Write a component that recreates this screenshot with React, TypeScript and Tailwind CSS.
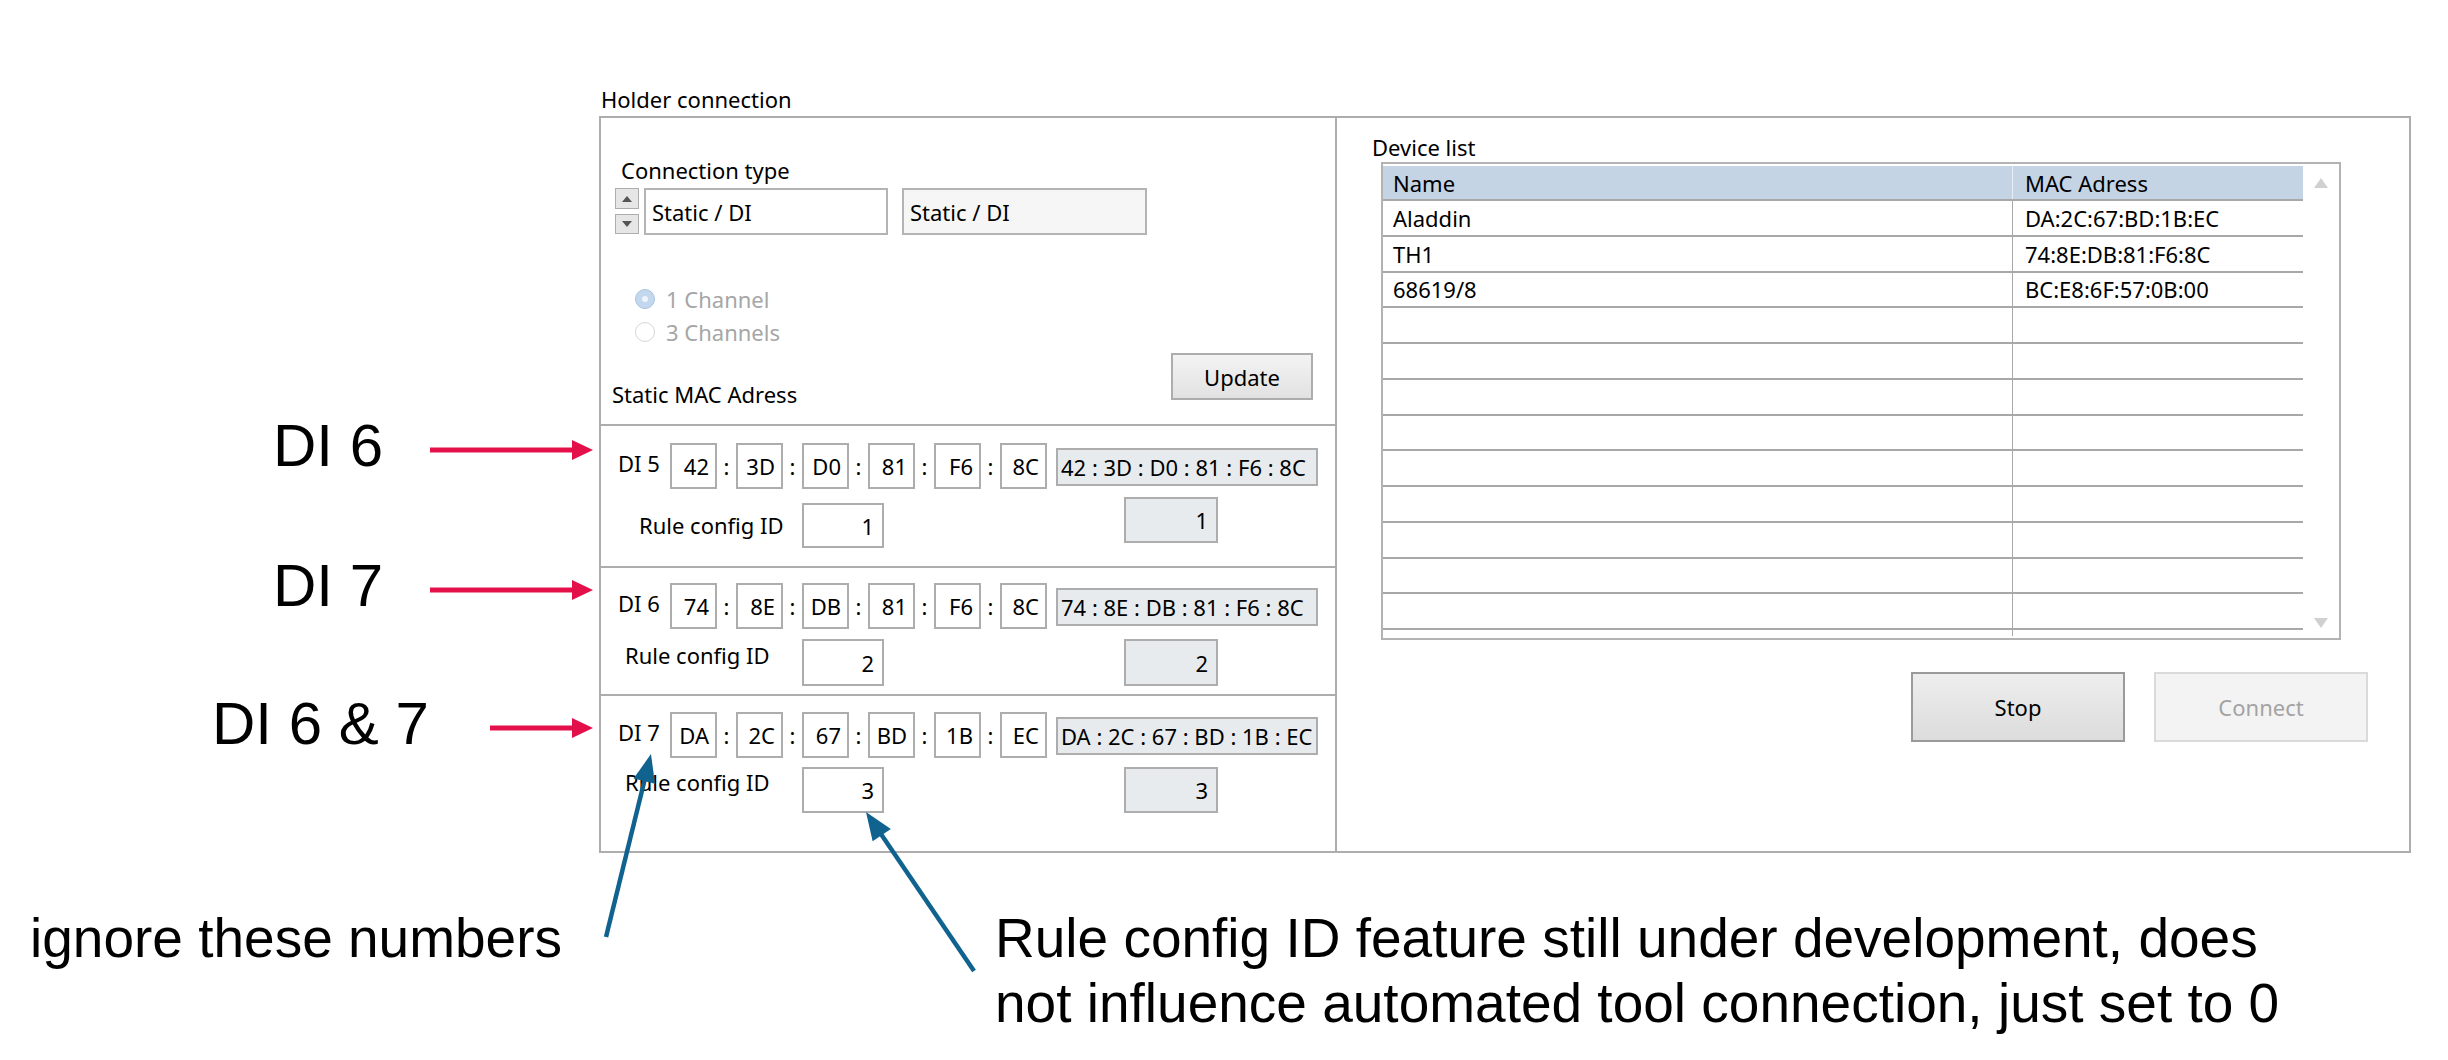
import React from 'react'

type MacRow = {
  label: string
  octets: string[]
  display: string
  ruleId: string
}

const macRows: MacRow[] = [
  { label: 'DI 5', octets: ['42', '3D', 'D0', '81', 'F6', '8C'], display: '42 : 3D : D0 : 81 : F6 : 8C', ruleId: '1' },
  { label: 'DI 6', octets: ['74', '8E', 'DB', '81', 'F6', '8C'], display: '74 : 8E : DB : 81 : F6 : 8C', ruleId: '2' },
  { label: 'DI 7', octets: ['DA', '2C', '67', 'BD', '1B', 'EC'], display: 'DA : 2C : 67 : BD : 1B : EC', ruleId: '3' },
]

const devices = [
  { name: 'Aladdin', mac: 'DA:2C:67:BD:1B:EC' },
  { name: 'TH1', mac: '74:8E:DB:81:F6:8C' },
  { name: '68619/8', mac: 'BC:E8:6F:57:0B:00' },
]

function Spinner() {
  return (
    <div className="flex w-[24px] flex-col gap-[5px]">
      <div className="flex h-[21px] items-center justify-center border border-[#adadad] bg-[#e6e6e6]">
        <svg width="10" height="6" viewBox="0 0 10 6"><path d="M0 6 L5 0 L10 6 Z" fill="#555" /></svg>
      </div>
      <div className="flex h-[20px] items-center justify-center border border-[#adadad] bg-[#e6e6e6]">
        <svg width="10" height="6" viewBox="0 0 10 6"><path d="M0 0 L5 6 L10 0 Z" fill="#555" /></svg>
      </div>
    </div>
  )
}

function OctetBoxes({ row }: { row: MacRow }) {
  return (
    <div className="flex items-start">
      <div className="mt-[7px] w-[52px] whitespace-nowrap">{row.label}</div>
      {row.octets.map((o, i) => (
        <div key={i} className="flex items-start">
          {i > 0 && <div className="flex h-[46px] w-[19px] items-center justify-center">:</div>}
          <div className="flex h-[46px] w-[47px] items-center justify-end border-2 border-[#adadad] bg-white pr-[6px]">
            {o}
          </div>
        </div>
      ))}
      <div className="ml-[9px] mt-[5px] flex h-[38px] w-[262px] items-center overflow-hidden whitespace-nowrap border-2 border-[#adadad] bg-[#e8ebee] pl-[3px]">
        {row.display}
      </div>
    </div>
  )
}

function RuleRow({ id, labelPad, labelTop, boxH, boxTop, grayH }: {
  id: string
  labelPad: string
  labelTop: string
  boxH: string
  boxTop: string
  grayH: string
}) {
  return (
    <div className="flex items-start">
      <div className={`w-[201px] whitespace-nowrap ${labelPad} ${labelTop}`}>Rule config ID</div>
      <div className={`flex w-[82px] items-center justify-end border-2 border-[#adadad] bg-white pr-[8px] ${boxH} ${boxTop}`}>
        {id}
      </div>
      <div className={`ml-[240px] flex w-[94px] items-center justify-end border-2 border-[#adadad] bg-[#e8ebee] pr-[8px] ${grayH}`}>
        {id}
      </div>
    </div>
  )
}

function LeftPanel() {
  return (
    <div className="flex w-[736px] flex-col border-r-2 border-[#adadad]">
      {/* Connection type + channels */}
      <div className="h-[308px] border-b-2 border-[#adadad]">
        <div className="pl-[20px] pt-[39px]">Connection type</div>
        <div className="mt-[5px] flex items-start pl-[14px]">
          <Spinner />
          <div className="ml-[5px] flex h-[47px] w-[244px] items-center border-2 border-[#b4b4b4] bg-white pl-[6px]">
            Static / DI
          </div>
          <div className="ml-[14px] flex h-[47px] w-[245px] items-center border-2 border-[#b4b4b4] bg-[#f6f6f6] pl-[6px]">
            Static / DI
          </div>
        </div>
        <div className="mt-[47px] pl-[34px] text-[#a6a6a6]">
          <div className="flex h-[33px] items-center gap-[11px]">
            <span className="flex h-[20px] w-[20px] items-center justify-center rounded-full border border-[#a9c3df] bg-[#c3d8ee]">
              <span className="h-[6px] w-[6px] rounded-full bg-[#eef4fa]" />
            </span>
            1 Channel
          </div>
          <div className="flex h-[33px] items-center gap-[11px]">
            <span className="h-[20px] w-[20px] rounded-full border border-[#d6d6d6] bg-white" />
            3 Channels
          </div>
        </div>
        <div className="flex h-[76px] items-start justify-between">
          <div className="ml-[11px] mt-[33px]">Static MAC Adress</div>
          <button className="mr-[22px] mt-[5px] h-[47px] w-[142px] border-2 border-[#adadad] bg-gradient-to-b from-[#f3f3f3] to-[#e2e2e2]">
            Update
          </button>
        </div>
      </div>

      {/* DI 5 */}
      <div className="h-[142px] border-b-2 border-[#adadad] pl-[17px] pt-[17px]">
        <OctetBoxes row={macRows[0]} />
        <div className="mt-[8px] -ml-[17px]">
          <RuleRow id={macRows[0].ruleId} labelPad="pl-[38px]" labelTop="mt-[15px]" boxH="h-[45px]" boxTop="mt-[6px]" grayH="h-[46px]" />
        </div>
      </div>

      {/* DI 6 */}
      <div className="h-[128px] border-b-2 border-[#adadad] pl-[17px] pt-[15px]">
        <OctetBoxes row={macRows[1]} />
        <div className="mt-[10px] -ml-[17px]">
          <RuleRow id={macRows[1].ruleId} labelPad="pl-[24px]" labelTop="mt-[3px]" boxH="h-[47px]" boxTop="mt-0" grayH="h-[47px]" />
        </div>
      </div>

      {/* DI 7 */}
      <div className="flex-1 pl-[17px] pt-[16px]">
        <OctetBoxes row={macRows[2]} />
        <div className="mt-[9px] -ml-[17px]">
          <RuleRow id={macRows[2].ruleId} labelPad="pl-[24px]" labelTop="mt-[2px]" boxH="h-[46px]" boxTop="mt-0" grayH="h-[46px]" />
        </div>
      </div>
    </div>
  )
}

function RightPanel() {
  const rows = Array.from({ length: 13 }, (_, i) => devices[i] ?? { name: '', mac: '' })
  return (
    <div className="flex-1">
      <div className="pl-[35px] pt-[16px]">Device list</div>
      <div className="ml-[44px] mt-[2px] flex h-[478px] w-[960px] border-2 border-[#b3b3b3] pt-[2px]">
        <div className="h-[470px] w-[920px] overflow-hidden">
          <div className="flex h-[35px] border-b-2 border-[#a8a8a8] bg-[#c4d4e5]">
            <div className="flex w-[630px] items-center border-r border-[#e8eef4] pl-[10px]">Name</div>
            <div className="flex flex-1 items-center pl-[12px]">MAC Adress</div>
          </div>
          {rows.map((r, i) => (
            <div key={i} className="flex h-[35.75px] border-b-2 border-[#a8a8a8] text-[22px]">
              <div className="flex w-[630px] items-center border-r border-[#a8a8a8] pl-[10px]">{r.name}</div>
              <div className="flex flex-1 items-center pl-[12px]">{r.mac}</div>
            </div>
          ))}
        </div>
        <div className="flex w-[36px] flex-col items-center justify-between pb-[10px] pt-[12px]">
          <svg width="14" height="10" viewBox="0 0 14 10"><path d="M0 10 L7 0 L14 10 Z" fill="#d0d0d0" /></svg>
          <svg width="14" height="10" viewBox="0 0 14 10"><path d="M0 0 L7 10 L14 0 Z" fill="#d0d0d0" /></svg>
        </div>
      </div>
      <div className="mt-[32px] flex justify-end gap-[29px] pr-[41px]">
        <button className="h-[70px] w-[214px] border-2 border-[#9a9a9a] bg-gradient-to-b from-[#eeeeee] to-[#dcdcdc]">
          Stop
        </button>
        <button className="h-[70px] w-[214px] border-2 border-[#dadada] bg-[#f3f3f3] text-[#a3a3a3]">
          Connect
        </button>
      </div>
    </div>
  )
}

function Arrow({ x1, y1, x2, y2, color, width, head, half }: {
  x1: number; y1: number; x2: number; y2: number
  color: string; width: number; head: number; half: number
}) {
  const dx = x2 - x1
  const dy = y2 - y1
  const len = Math.hypot(dx, dy)
  const ux = dx / len
  const uy = dy / len
  const bx = x2 - ux * head
  const by = y2 - uy * head
  const nx = -uy * half
  const ny = ux * half
  return (
    <g>
      <line x1={x1} y1={y1} x2={bx + ux * 2} y2={by + uy * 2} stroke={color} strokeWidth={width} />
      <polygon points={`${x2},${y2} ${bx + nx},${by + ny} ${bx - nx},${by - ny}`} fill={color} />
    </g>
  )
}

function Annotations() {
  const red = '#e3104a'
  const blue = '#10628f'
  return (
    <>
      <div className="absolute left-[273px] top-[416px] whitespace-nowrap font-['Liberation_Sans',Arial,sans-serif] text-[60px] leading-[60px]">DI 6</div>
      <div className="absolute left-[273px] top-[556px] whitespace-nowrap font-['Liberation_Sans',Arial,sans-serif] text-[60px] leading-[60px]">DI 7</div>
      <div className="absolute left-[212px] top-[694px] whitespace-nowrap font-['Liberation_Sans',Arial,sans-serif] text-[60px] leading-[60px]">DI 6 &amp; 7</div>
      <div className="absolute left-[30px] top-[911px] whitespace-nowrap font-['Liberation_Sans',Arial,sans-serif] text-[55px] leading-[55px]">ignore these numbers</div>
      <div className="absolute left-[995px] top-[906px] whitespace-nowrap font-['Liberation_Sans',Arial,sans-serif] text-[55px] leading-[65px]">
        Rule config ID feature still under development, does
        <br />
        not influence automated tool connection, just set to 0
      </div>
      <svg className="pointer-events-none absolute left-0 top-0" width="2448" height="1060">
        <Arrow x1={430} y1={450} x2={593} y2={450} color={red} width={5} head={21} half={10} />
        <Arrow x1={430} y1={590} x2={593} y2={590} color={red} width={5} head={21} half={10} />
        <Arrow x1={490} y1={728} x2={593} y2={728} color={red} width={5} head={21} half={10} />
        <Arrow x1={606} y1={937} x2={651} y2={754} color={blue} width={4.5} head={28} half={11} />
        <Arrow x1={974} y1={971} x2={866} y2={812} color={blue} width={4.5} head={28} half={11} />
      </svg>
    </>
  )
}

export default function App() {
  return (
    <div className="relative h-[1060px] w-[2448px] overflow-hidden bg-white">
      <div className="pl-[599px] pt-[86px] font-['Noto_Sans',sans-serif] text-[22px] leading-[26px] text-black">
        <div className="pl-[2px]">Holder connection</div>
        <div className="mt-[4px] flex h-[737px] w-[1812px] border-2 border-[#adadad]">
          <LeftPanel />
          <RightPanel />
        </div>
      </div>
      <Annotations />
    </div>
  )
}
